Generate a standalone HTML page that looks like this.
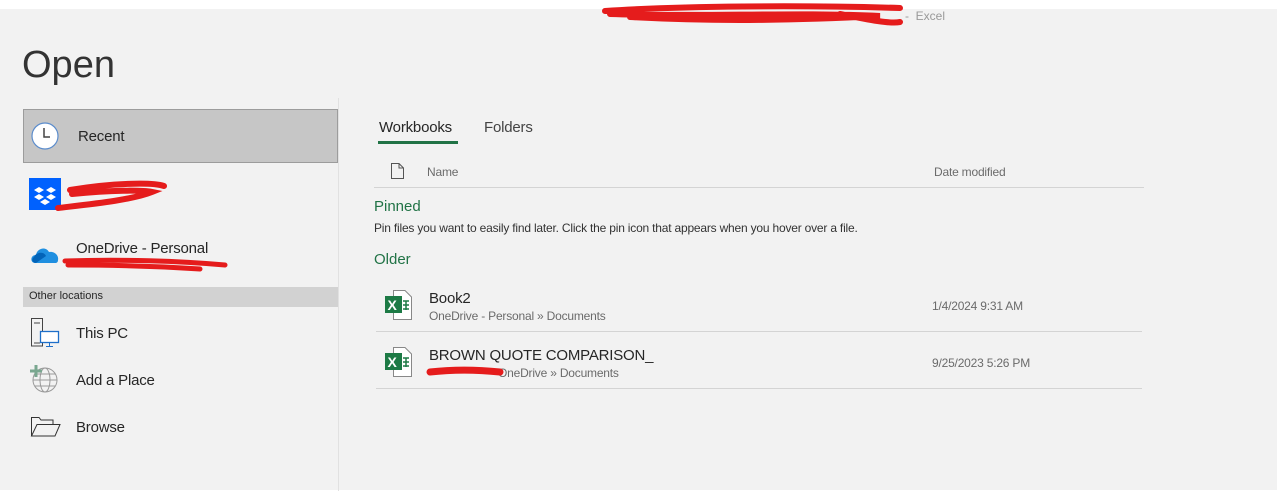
<!DOCTYPE html>
<html><head><meta charset="utf-8"><style>
*{margin:0;padding:0;box-sizing:border-box}
body{width:1278px;height:491px;background:#fff;position:relative;overflow:hidden;font-family:"Liberation Sans",sans-serif;color:#262626}
.bg{position:absolute;left:0;top:9px;width:1277px;height:481px;background:#f2f2f2}
.a{position:absolute;white-space:nowrap}
.vl{position:absolute;left:338px;top:98px;width:1px;height:393px;background:#e1e1e1}
.hl{position:absolute;height:1px;background:#d4d4d4}
.t{font-size:15px;color:#262626;letter-spacing:-0.2px}
.s{font-size:12px;color:#6b6b6b;letter-spacing:-0.2px}
</style></head><body>
<div class="bg"></div>
<div class="a" style="left:905px;top:9px;font-size:12px;color:#999">-&nbsp; Excel</div>
<svg class="a" style="left:600px;top:2px" width="310" height="26"><path d="M5 9 C80 4 200 3 300 6 M10 12 C100 15 200 10 280 14 C200 18 120 20 30 15 M240 12 C270 18 290 22 300 20" stroke="#e51c1c" stroke-width="6" fill="none" stroke-linecap="round"/></svg>
<div class="a" style="left:22px;top:44px;font-size:38px;font-weight:normal;color:#333">Open</div>
<div class="vl"></div>
<div class="a" style="left:23px;top:109px;width:315px;height:54px;background:#c6c6c6;border:1px solid #9c9c9c"></div>
<svg class="a" style="left:30px;top:121px" width="30" height="30"><circle cx="15" cy="15" r="13" fill="#fff" stroke="#5b8ccc" stroke-width="1.2"/><path d="M14 7V16H20" stroke="#444" stroke-width="1.5" fill="none"/></svg>
<div class="a t" style="left:78px;top:128px">Recent</div>
<div class="a" style="left:29px;top:178px;width:32px;height:32px;background:#0061fe"></div>
<svg class="a" style="left:29px;top:178px" width="32" height="32" fill="#fff"><path d="M10 9l5 3-5 3-5-3zM22 9l5 3-5 3-5-3zM10 16l5 3-5 3-5-3zM22 16l5 3-5 3-5-3zM16 21l5 3-5 3-5-3z"/></svg>
<svg class="a" style="left:52px;top:178px" width="120" height="36"><path d="M18 12 C60 5 100 4 112 8 M20 16 C60 12 90 12 100 14 C80 22 40 26 6 30" stroke="#e51c1c" stroke-width="6" fill="none" stroke-linecap="round"/></svg>
<svg class="a" style="left:30px;top:243px" width="30" height="22"><path d="M5 20 C0 20 0 12 6 12 C7 5 16 3 19 9 C25 8 29 13 28 17 C28 19 27 20 25 20Z" fill="#1f8fe0"/><path d="M4 14 C6 9 14 8 16 13 L6 20 C2 20 1 16 4 14Z" fill="#0364b8"/></svg>
<div class="a t" style="left:76px;top:240px">OneDrive - Personal</div>
<svg class="a" style="left:60px;top:255px" width="170" height="20"><path d="M5 6 C60 4 120 6 165 10 M8 10 C60 10 110 12 140 14" stroke="#e51c1c" stroke-width="5" fill="none" stroke-linecap="round"/></svg>
<div class="a" style="left:23px;top:287px;width:315px;height:20px;background:#d2d2d2;font-size:11px;color:#262626;padding:3px 0 0 6px">Other locations</div>
<svg class="a" style="left:30px;top:317px" width="30" height="30" fill="none"><path d="M1.5 1.5H12.5V29H1.5Z" stroke="#444"/><path d="M4 6h6M4 26h6" stroke="#444"/><rect x="10.5" y="14.5" width="18" height="11" fill="#fff" stroke="#1e6fc9" stroke-width="1.3"/><path d="M19.5 26v3M16 29.5h7" stroke="#1e6fc9"/></svg>
<div class="a t" style="left:76px;top:325px">This PC</div>
<svg class="a" style="left:29px;top:364px" width="30" height="30" fill="none"><circle cx="16" cy="16" r="12" stroke="#999"/><ellipse cx="16" cy="16" rx="5" ry="12" stroke="#999"/><path d="M4 16h24M6 10h20M6 22h20" stroke="#999"/><path d="M7 1v12M1 7h12" stroke="#7aa790" stroke-width="3"/></svg>
<div class="a t" style="left:76px;top:372px">Add a Place</div>
<svg class="a" style="left:30px;top:414px" width="32" height="24" fill="none" stroke="#333"><path d="M1.5 22V3.5H9l2 2.5h12v4"/><path d="M1.5 22L7 10.5H30L25 22Z"/></svg>
<div class="a t" style="left:76px;top:419px">Browse</div>
<div class="a t" style="left:379px;top:119px">Workbooks</div>
<div class="a" style="left:378px;top:141px;width:80px;height:3px;background:#217346"></div>
<div class="a t" style="left:484px;top:119px;color:#444">Folders</div>
<svg class="a" style="left:390px;top:162px" width="16" height="18" fill="none" stroke="#555"><path d="M1.5 1.5H9l4.5 4.5V16.5h-12Z M9 1.5V6h4.5"/></svg>
<div class="a s" style="left:427px;top:165px">Name</div>
<div class="a s" style="left:934px;top:165px">Date modified</div>
<div class="hl" style="left:374px;top:187px;width:770px"></div>
<div class="a" style="left:374px;top:198px;font-size:15px;color:#217346">Pinned</div>
<div class="a" style="left:374px;top:221px;font-size:12px;color:#333;letter-spacing:-0.2px">Pin files you want to easily find later. Click the pin icon that appears when you hover over a file.</div>
<div class="a" style="left:374px;top:251px;font-size:15px;color:#217346">Older</div>
<svg class="a" style="left:384px;top:289px" width="30" height="32"><path d="M9.5 1.5H21l6.5 6.5V30.5h-18Z" fill="#fff" stroke="#888"/><rect x="1" y="7" width="17" height="17" fill="#1d7a45"/><text x="3.5" y="21" font-family="Liberation Sans" font-weight="bold" font-size="14" fill="#fff">X</text><path d="M19 12h6M19 16h6M19 20h6M22 12v9" stroke="#1d7a45" stroke-width="1.5"/></svg>
<div class="a t" style="left:429px;top:290px">Book2</div>
<div class="a s" style="left:429px;top:309px">OneDrive - Personal » Documents</div>
<div class="a s" style="left:932px;top:299px">1/4/2024 9:31 AM</div>
<div class="hl" style="left:376px;top:331px;width:766px"></div>
<svg class="a" style="left:384px;top:346px" width="30" height="32"><path d="M9.5 1.5H21l6.5 6.5V30.5h-18Z" fill="#fff" stroke="#888"/><rect x="1" y="7" width="17" height="17" fill="#1d7a45"/><text x="3.5" y="21" font-family="Liberation Sans" font-weight="bold" font-size="14" fill="#fff">X</text><path d="M19 12h6M19 16h6M19 20h6M22 12v9" stroke="#1d7a45" stroke-width="1.5"/></svg>
<div class="a t" style="left:429px;top:347px">BROWN QUOTE COMPARISON_</div>
<div class="a s" style="left:498px;top:366px">OneDrive » Documents</div>
<svg class="a" style="left:426px;top:364px" width="80" height="16"><path d="M4 8 C30 5 55 6 74 8" stroke="#e51c1c" stroke-width="7" fill="none" stroke-linecap="round"/></svg>
<div class="a s" style="left:932px;top:356px">9/25/2023 5:26 PM</div>
<div class="hl" style="left:376px;top:388px;width:766px"></div>
</body></html>
